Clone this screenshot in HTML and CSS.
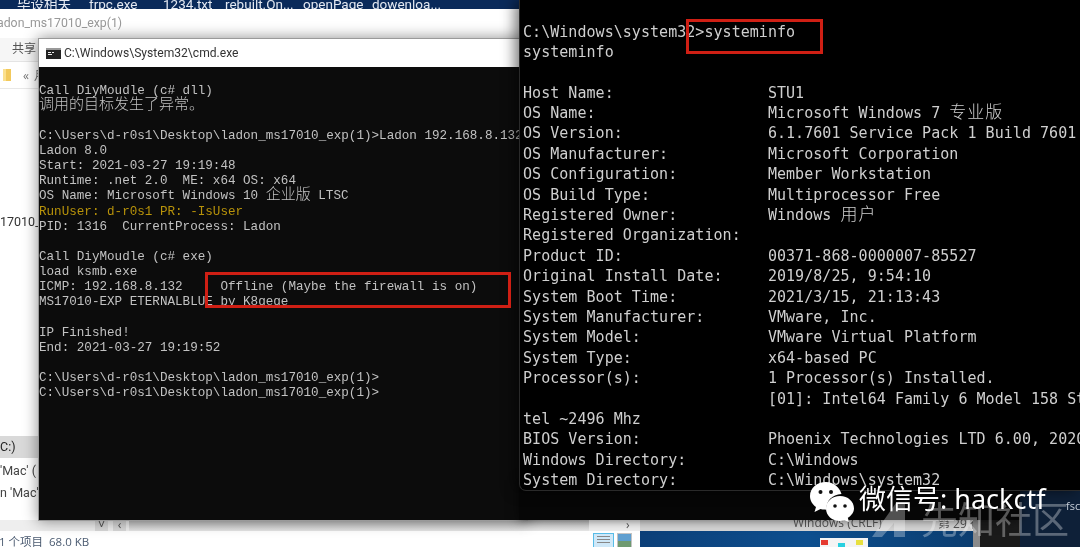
FILE: index.html
```html
<!DOCTYPE html>
<html lang="zh">
<head>
<meta charset="utf-8">
<title>systeminfo</title>
<link rel="stylesheet" href="styles.css">
</head>
<body>
<div class="stage">
  <div class="taskbar">
    <span class="t1">毕设相关</span><span class="t2">frpc.exe</span><span class="t3">1234.txt</span><span class="t4">rebuilt.On...</span><span class="t5">openPage</span><span class="t6">dowenloa...</span>
  </div>

  <div class="explorer">
    <div class="ex-title"><span>ladon_ms17010_exp(1)</span></div>
    <div class="ex-ribbon"><span>共享</span></div>
    <div class="ex-address">
      <svg class="folder" width="9" height="14" viewBox="0 0 9 14"><path d="M0 1h8v12H0z" fill="#f2c95c"/><path d="M0 1h3v12H0z" fill="#fbe08e"/></svg>
      <span class="crumb">«</span><span class="crumb2">月</span>
    </div>
    <div class="ex-body">
      <div class="file">17010_</div>
      <div class="nav sel"><span>C:)</span></div>
      <div class="nav"><span>'Mac' (</span></div>
      <div class="nav"><span>n 'Mac'</span></div>
    </div>
    <div class="ex-scroll">
      <span class="sb-btn">˅</span><span class="sb-btn">‹</span><span class="sb-thumb"></span><span class="sb-end">›</span>
    </div>
    <div class="ex-status">
      <span class="count">1 个项目&nbsp;&nbsp;68.0 KB</span>
      <span class="view on"><i></i><i></i><i></i></span>
      <span class="view pic"></span>
    </div>
  </div>

  <div class="notepad">
    <div class="np-status"><span class="np-enc">Windows (CRLF)</span><span class="np-pos">第 29 行</span></div>
    <div class="np-desk">
      <div class="mini"><b class="d1"></b><b class="d2"></b><b class="d3"></b></div>
    </div>
  </div>
  <div class="side-dark"></div>
  <div class="side-blue"><span>fsc</span></div>

  <div class="cmd">
    <div class="cmd-title">
      <svg class="cmd-ico" width="15" height="11" viewBox="0 0 15 11"><rect width="15" height="11" fill="#222"/><rect y="0" width="15" height="2" fill="#999"/><path d="M2 4h3v1H2zM6 4h2v1H6zM2 6h4v1H2z" fill="#eee"/></svg>
      <span>C:\Windows\System32\cmd.exe</span>
    </div>
    <div class="cmd-body">
      <div class="ln">Call DiyMoudle (c# dll)</div>
      <div class="ln"><span class="cj">调用的目标发生了异常。</span></div>
      <div class="ln"></div>
      <div class="ln">C:\Users\d-r0s1\Desktop\ladon_ms17010_exp(1)&gt;Ladon 192.168.8.132</div>
      <div class="ln">Ladon 8.0</div>
      <div class="ln">Start: 2021-03-27 19:19:48</div>
      <div class="ln">Runtime: .net 2.0  ME: x64 OS: x64</div>
      <div class="ln">OS Name: Microsoft Windows 10 <span class="cj">企业版</span> LTSC</div>
      <div class="ln gold">RunUser: d-r0s1 PR: -IsUser</div>
      <div class="ln">PID: 1316  CurrentProcess: Ladon</div>
      <div class="ln"></div>
      <div class="ln">Call DiyMoudle (c# exe)</div>
      <div class="ln">load ksmb.exe</div>
      <div class="ln">ICMP: 192.168.8.132     Offline (Maybe the firewall is on)</div>
      <div class="ln">MS17010-EXP ETERNALBLUE by K8gege</div>
      <div class="ln"></div>
      <div class="ln">IP Finished!</div>
      <div class="ln">End: 2021-03-27 19:19:52</div>
      <div class="ln"></div>
      <div class="ln">C:\Users\d-r0s1\Desktop\ladon_ms17010_exp(1)&gt;</div>
      <div class="ln">C:\Users\d-r0s1\Desktop\ladon_ms17010_exp(1)&gt;</div>
    </div>
  </div>

  <div class="term-shadow"></div>
  <div class="term">
    <div class="tl">C:\Windows\system32&gt;systeminfo</div>
    <div class="tl">systeminfo</div>
    <div class="tl"></div>
    <div class="tl">Host Name:                 STU1</div>
    <div class="tl">OS Name:                   Microsoft Windows 7 <span class="cj2">专业版</span></div>
    <div class="tl">OS Version:                6.1.7601 Service Pack 1 Build 7601</div>
    <div class="tl">OS Manufacturer:           Microsoft Corporation</div>
    <div class="tl">OS Configuration:          Member Workstation</div>
    <div class="tl">OS Build Type:             Multiprocessor Free</div>
    <div class="tl">Registered Owner:          Windows <span class="cj2">用户</span></div>
    <div class="tl">Registered Organization:</div>
    <div class="tl">Product ID:                00371-868-0000007-85527</div>
    <div class="tl">Original Install Date:     2019/8/25, 9:54:10</div>
    <div class="tl">System Boot Time:          2021/3/15, 21:13:43</div>
    <div class="tl">System Manufacturer:       VMware, Inc.</div>
    <div class="tl">System Model:              VMware Virtual Platform</div>
    <div class="tl">System Type:               x64-based PC</div>
    <div class="tl">Processor(s):              1 Processor(s) Installed.</div>
    <div class="tl">                           [01]: Intel64 Family 6 Model 158 Stepping</div>
    <div class="tl">tel ~2496 Mhz</div>
    <div class="tl">BIOS Version:              Phoenix Technologies LTD 6.00, 2020</div>
    <div class="tl">Windows Directory:         C:\Windows</div>
    <div class="tl">System Directory:          C:\Windows\system32</div>
  </div>

  <div class="redbox rb-left"></div>
  <div class="redbox rb-right"></div>

  <svg class="xz-logo" width="36" height="36" viewBox="0 0 36 36"><path d="M24 0h9L33 34H22V20L10 34H0z" fill="#fff" fill-opacity=".3"/></svg>
  <div class="xz-text">先知社区</div>

  <svg class="wx-logo" width="44" height="40" viewBox="0 0 44 40">
    <path d="M16 0C7 0 0 6 0 14c0 4.500 2.300 8.500 6 11l-1.500 5 6-3c1.300.4 2.500.6 4 .6l2 .1C15.800 19 22 12.500 31.500 12 29.500 5 23.500 0 16 0z" fill="#fff"/>
    <circle cx="10.500" cy="10" r="2" fill="#111"/><circle cx="21" cy="10" r="2" fill="#111"/>
    <path d="M30 14c-8 0-14 5.500-14 12.500S22 39 30 39c1.600 0 3-.3 4.400-.7l4.600 1.700-1.200-4.200C41.500 33.500 44 30.200 44 26.500 44 19.500 38 14 30 14z" fill="#fff"/>
    <circle cx="25" cy="24" r="1.800" fill="#111"/><circle cx="35" cy="24" r="1.800" fill="#111"/>
  </svg>
  <div class="wx-text">微信号: hackctf</div>
</div>
</body>
</html>
```
FILE: styles.css
```css
* { box-sizing: border-box; }
html, body { margin: 0; padding: 0; background: #0c1c2c; }
body { width: 1080px; height: 547px; overflow: hidden; }

.stage {
  position: relative;
  width: 1080px;
  height: 547px;
  overflow: hidden;
  background: #0b1a2b;
  font-family: "Open Sans", "Noto Sans CJK SC", sans-serif;
  filter: blur(0.45px);
}

/* top desktop strip */
.taskbar {
  position: absolute;
  left: 0; top: 0;
  width: 520px;
  height: 9px;
  background: #0a2a5a;
  color: #e4e9f2;
  font-family: Roboto, "Noto Sans CJK SC", sans-serif;
  font-size: 13.500px;
  line-height: 8px;
  overflow: hidden;
  display: grid;
  grid-template-columns: 89px 74px 62px 78px 69px 1fr;
}
.taskbar span:first-child { padding-left: 17px; }

/* explorer behind the cmd window */
.explorer {
  position: absolute;
  left: 0; top: 9px;
  width: 640px;
  height: 538px;
  background: #fff;
  display: flex;
  flex-direction: column;
  color: #333;
  overflow: hidden;
}
.ex-title {
  height: 29px;
  font-family: Roboto, sans-serif;
  font-size: 12.300px;
  line-height: 28px;
  color: #999;
  margin-left: -6px;
  flex: none;
}
.ex-ribbon {
  height: 24px;
  font-size: 12px;
  line-height: 22px;
  padding-left: 12px;
  color: #555;
  background: #f6f6f6;
  border-bottom: 1px solid #e4e4e4;
  flex: none;
}
.ex-address {
  height: 27px;
  display: flex;
  align-items: center;
  font-size: 12px;
  color: #777;
  border-bottom: 1px solid #e8e8e8;
  padding-left: 3px;
  flex: none;
}
.crumb { margin-left: 11px; }
.crumb2 { margin-left: 5px; }
.ex-body { flex: 1; position: relative; padding-top: 123px; font-size: 13px; }
.file { height: 20px; line-height: 20px; font-family: Roboto, sans-serif; font-size: 12.500px; color: #333; margin-bottom: 204px; }
.nav { height: 22px; line-height: 22px; color: #444; font-family: Roboto, sans-serif; font-size: 12.500px; }
.nav.sel { background: #d9d9d9; color: #222; margin-bottom: 2px; }
.nav span { display: block; }
.ex-scroll {
  height: 11px;
  flex: none;
  display: flex;
  background: #eee;
  font-size: 12px;
  line-height: 10px;
  color: #555;
  padding-left: 95px;
  gap: 5px;
}
.sb-btn { width: 13px; background: #d8d8d8; text-align: center; }
.sb-thumb { width: 460px; background: linear-gradient(#bcbcbc, #e6e6e6); margin-left: -2px; }
.sb-end { margin-left: 32px; }
.ex-status {
  height: 16px;
  flex: none;
  display: flex;
  align-items: center;
  padding-top: 4px;
  font-size: 11.500px;
  color: #4a5a70;
}
.count { margin-left: -1px; margin-right: auto; }
.view { display: block; flex: none; height: 15px; margin-top: -2px; }
.view.on {
  width: 21px;
  margin-right: 3px;
  background: #cfe8f8;
  border: 1px solid #58bde8;
  padding: 2px 3px;
}
.view.on i { display: block; height: 1px; margin-bottom: 2px; background: #888; }
.view.pic {
  width: 15px;
  margin-right: 8px;
  border: 1px solid #c4c4c4;
  background: linear-gradient(#5f9fd0 0 50%, #6f9a70 50%);
}

/* bottom notepad window on the remote desktop */
.notepad {
  position: absolute;
  left: 640px; top: 500px;
  width: 333px;
  height: 47px;
  display: flex;
  flex-direction: column;
  background: #e8e8e8;
}
.np-status {
  height: 31px;
  flex: none;
  background: #d4d4d4;
  font-size: 12px;
  color: #555;
  position: relative;
}
.np-enc { position: absolute; left: 153px; top: 14px; }
.np-pos { position: absolute; left: 298px; top: 14px; white-space: nowrap; }
.np-desk {
  flex: 1;
  background: linear-gradient(90deg, #0c3f78, #0d4f8f 50%, #0b3d70);
  position: relative;
}
.mini {
  position: absolute;
  left: 180px; top: 7px;
  width: 48px; height: 12px;
  background: #f4f4f4;
}
.mini b { position: absolute; top: 2px; width: 7px; height: 5px; }
.d1 { left: 1px; background: #e53a30; }
.d2 { left: 18px; top: 5px !important; background: #29d0e0; }
.d3 { left: 36px; background: #e8e040; }

.side-dark {
  position: absolute;
  left: 973px; top: 491px;
  width: 50px; height: 56px;
  background: linear-gradient(90deg, #8a8a8a 0 7px, #1a1a1a 7px);
}
.side-blue {
  position: absolute;
  left: 1020px; top: 491px;
  width: 60px; height: 56px;
  background: #0e2038;
  color: #c8d0da;
  font-size: 11px;
  line-height: 30px;
  padding-left: 46px;
  overflow: hidden;
}

/* left cmd window */
.cmd {
  position: absolute;
  left: 38px; top: 38px;
  width: 490px;
  height: 483px;
  background: #0c0c0c;
  border: 1px solid #9a9a9a;
  box-shadow: 0 0 14px rgba(0, 0, 0, .45);
  display: flex;
  flex-direction: column;
}
.cmd-title {
  height: 28px;
  flex: none;
  background: #fff;
  display: flex;
  align-items: center;
  padding-left: 7px;
  gap: 3px;
  font-family: Roboto, sans-serif;
  font-size: 12.100px;
  color: #333;
}
.cmd-body {
  flex: 1;
  padding-top: 16.500px;
  color: #c2c2c2;
  font-family: "Liberation Mono", "Noto Sans CJK SC", monospace;
  font-size: 12.600px;
  overflow: hidden;
}
.ln { height: 15.150px; line-height: 15.150px; white-space: pre; }
.cj { font-size: 15px; line-height: 0; font-family: "Noto Sans CJK SC", sans-serif; font-weight: 300; }
.gold { color: #b8930a; }

/* right terminal */
.term-shadow {
  position: absolute;
  left: 519px; top: 480px;
  width: 501px; height: 40px;
  background: #060606;
  box-shadow: 0 0 10px rgba(0, 0, 0, .6);
}
.term {
  position: absolute;
  left: 519px; top: 0;
  width: 561px;
  height: 491px;
  background: #000;
  border-left: 1px solid #2a2a2a;
  border-bottom: 1px solid #2a2a2a;
  border-bottom-left-radius: 7px;
  box-shadow: -4px 0 14px rgba(0, 0, 0, .55);
  padding: 21.500px 0 0 3px;
  color: #cfcfcf;
  font-family: "DejaVu Sans Mono", "Noto Sans CJK SC", monospace;
  font-size: 15px;
  letter-spacing: .04px;
  overflow: hidden;
}
.tl { height: 20.400px; line-height: 20.400px; white-space: pre; }
.cj2 { font-size: 17px; line-height: 0; font-family: "Noto Sans CJK SC", sans-serif; font-weight: 300; letter-spacing: 1px; }

/* overlays */
.redbox { position: absolute; border: 3px solid #cf1f14; }
.rb-left { left: 205px; top: 272px; width: 306px; height: 36px; }
.rb-right { left: 686px; top: 19px; width: 137px; height: 35px; }

.xz-logo { position: absolute; left: 872px; top: 503px; }
.xz-text {
  position: absolute;
  left: 921px; top: 492px;
  font-family: "Noto Sans CJK SC", sans-serif;
  font-size: 37px;
  line-height: 52px;
  color: rgba(255, 255, 255, .32);
  white-space: nowrap;
}
.wx-logo { position: absolute; left: 810px; top: 482px; }
.wx-text {
  position: absolute;
  left: 859px; top: 480px;
  font-family: "Noto Sans", "Noto Sans CJK SC", sans-serif;
  font-size: 27px;
  line-height: 38px;
  color: #fff;
  white-space: nowrap;
}
```
